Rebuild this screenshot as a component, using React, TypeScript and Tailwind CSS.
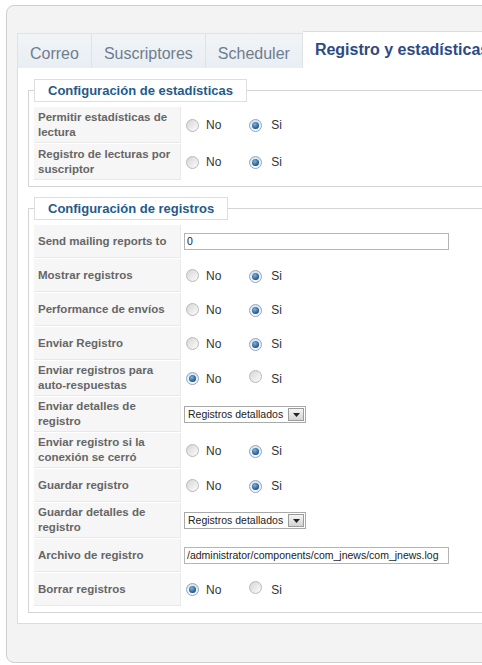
import React from "react";

type Row =
  | { label: string[]; kind: "radio"; value: "no" | "si" }
  | { label: string[]; kind: "input"; value: string }
  | { label: string[]; kind: "select"; value: string };

const statsRows: Row[] = [
  { label: ["Permitir estadísticas de", "lectura"], kind: "radio", value: "si" },
  { label: ["Registro de lecturas por", "suscriptor"], kind: "radio", value: "si" },
];

const logRows: Row[] = [
  { label: ["Send mailing reports to"], kind: "input", value: "0" },
  { label: ["Mostrar registros"], kind: "radio", value: "si" },
  { label: ["Performance de envíos"], kind: "radio", value: "si" },
  { label: ["Enviar Registro"], kind: "radio", value: "si" },
  { label: ["Enviar registros para", "auto-respuestas"], kind: "radio", value: "no" },
  { label: ["Enviar detalles de", "registro"], kind: "select", value: "Registros detallados" },
  { label: ["Enviar registro si la", "conexión se cerró"], kind: "radio", value: "si" },
  { label: ["Guardar registro"], kind: "radio", value: "si" },
  { label: ["Guardar detalles de", "registro"], kind: "select", value: "Registros detallados" },
  { label: ["Archivo de registro"], kind: "input", value: "/administrator/components/com_jnews/com_jnews.log" },
  { label: ["Borrar registros"], kind: "radio", value: "no" },
];

const tabs = ["Correo", "Suscriptores", "Scheduler"];

function Radio({ checked }: { checked?: boolean }) {
  if (checked) {
    return (
      <span className="inline-flex h-[13px] w-[13px] shrink-0 items-center justify-center rounded-full border border-[#8ea7bf] bg-gradient-to-b from-[#d8e3ee] to-[#f6f9fc]">
        <span className="h-[7px] w-[7px] rounded-full bg-[radial-gradient(circle_at_40%_35%,#7fb2df,#1a4e7e_75%)]" />
      </span>
    );
  }
  return (
    <span className="inline-block h-[13px] w-[13px] shrink-0 rounded-full border border-[#b9b9b9] bg-gradient-to-br from-[#d6d6d6] to-[#fcfcfc]" />
  );
}

function Select({ value }: { value: string }) {
  return (
    <div className="ml-[3px] flex h-[17px] w-[122px] items-center border border-[#a9a9a9] bg-white">
      <span className="flex-1 pl-[3px] text-[10.5px] leading-[15px] text-[#222]">{value}</span>
      <span className="mr-px flex h-[13px] w-[16px] items-center justify-center border border-[#9c9c9c] bg-gradient-to-b from-[#f4f4f4] to-[#d4d4d4]">
        <svg width="7" height="4" viewBox="0 0 7 4">
          <path d="M0 0h7L3.5 4z" fill="#222" />
        </svg>
      </span>
    </div>
  );
}

function FormRow({ row, tallH }: { row: Row; tallH: string }) {
  const tall = row.label.length > 1;
  return (
    <div className={`flex ${tall ? tallH : "h-[33px]"}`}>
      <div className="flex w-[147px] shrink-0 flex-col justify-center border-b border-r border-[#e9e9e9] bg-[#f6f6f6] px-[4px] text-[11.5px] font-bold leading-[15px] text-[#666]">
        {row.label.map((l) => (
          <span key={l} className="whitespace-nowrap">
            {l}
          </span>
        ))}
      </div>
      <div className="flex flex-1 items-center">
        {row.kind === "radio" && (
          <div className="ml-[5px] flex items-center text-[12px] text-[#333]">
            <Radio checked={row.value === "no"} />
            <span className="ml-[7px]">No</span>
            <span className="ml-[28px]">
              <Radio checked={row.value === "si"} />
            </span>
            <span className="ml-[9px]">Si</span>
          </div>
        )}
        {row.kind === "input" && (
          <div className="ml-[3px] flex h-[17px] w-[265px] items-center border border-[#b5b5b5] bg-white pl-[2px] text-[10.5px] text-[#222]">
            {row.value}
          </div>
        )}
        {row.kind === "select" && <Select value={row.value} />}
      </div>
    </div>
  );
}

function Section({
  title,
  rows,
  tallH,
  className,
}: {
  title: string;
  rows: Row[];
  tallH: string;
  className?: string;
}) {
  return (
    <fieldset className={`border border-[#d4d4d4] px-[5px] pb-[6px] pt-[5px] ${className ?? ""}`}>
      <legend className="h-[23px] border border-[#dedede] bg-white px-[13px] text-[13px] font-bold leading-[21px] text-[#1f5b8d]">
        {title}
      </legend>
      <div className="flex flex-col gap-px">
        {rows.map((r) => (
          <FormRow key={r.label.join(" ")} row={r} tallH={tallH} />
        ))}
      </div>
    </fieldset>
  );
}

export default function App() {
  return (
    <div className="h-[665px] w-[482px] overflow-hidden bg-white pl-[6px] pt-[5px] font-['Liberation_Sans',Arial,sans-serif]">
      <div className="h-[658px] w-[540px] rounded-[8px] border border-[#cfcfcf] bg-[#f3f3f3] pl-[10px] pt-[25px]">
        {/* tabs */}
        <div className="relative z-10 -mb-px flex items-end">
          {tabs.map((t, i) => (
            <div
              key={t}
              className={`h-[35px] border-t border-r border-[#dfe3e8] bg-gradient-to-b from-[#f1f4f7] to-[#e9eef3] px-[12px] pt-[10px] text-[16px] leading-[20px] text-[#6f7d8e] ${
                i === 0 ? "border-l" : ""
              }`}
            >
              {t}
            </div>
          ))}
          <div className="h-[37px] border-t border-r border-b border-[#dcdcdc] border-b-white bg-white px-[12px] pt-[8px] text-[16px] font-bold leading-[20px] whitespace-nowrap text-[#2d4a86]">
            Registro y estadísticas
          </div>
        </div>

        {/* panel */}
        <div className="border border-[#dcdcdc] bg-white pb-[10px] pl-[10px] pt-[11px]">
          <Section title="Configuración de estadísticas" rows={statsRows} tallH="h-[36px]" />
          <Section title="Configuración de registros" rows={logRows} tallH="h-[35px]" className="mt-[10px]" />
        </div>
      </div>
    </div>
  );
}
